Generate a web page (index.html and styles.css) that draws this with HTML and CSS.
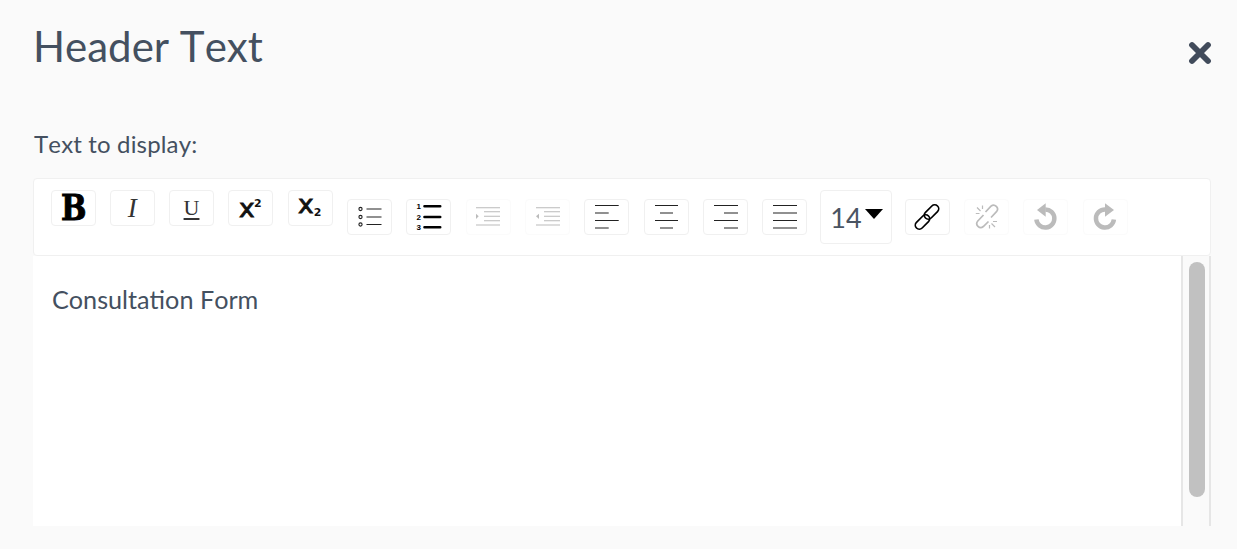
FILE: index.html
```html
<!DOCTYPE html>
<html lang="en">

<head>
    <meta charset="UTF-8">
    <meta name="viewport" content="width=device-width, initial-scale=1.0">
    <title>Header Text</title>
    <link rel="stylesheet" href="styles.css">
</head>

<body>
    <div class="modal">
        <div class="modal-header">
            <h1>Header Text</h1>
            <button class="close" aria-label="Close">
                <svg width="24" height="24" viewBox="0 0 24 24"><path d="M4 4 L20 20 M20 4 L4 20" /></svg>
            </button>
        </div>

        <label class="field-label">Text to display:</label>

        <div class="toolbar">
            <button class="tool bold"><span>B</span></button>
            <button class="tool italic">I</button>
            <button class="tool underline">U</button>
            <button class="tool script"><span class="x up">x</span><span class="num sup">2</span></button>
            <button class="tool script"><span class="x down">x</span><span class="num sub">2</span></button>

            <button class="tool low">
                <svg class="icon thin" viewBox="0 0 45 36">
                    <circle cx="13.5" cy="10" r="1.6" /><circle cx="13.5" cy="18" r="1.6" /><circle cx="13.5" cy="25.5" r="1.6" />
                    <path d="M19.5 10H34.5M19.5 18H34.5M19.5 25.5H34.5" />
                </svg>
            </button>
            <button class="tool low">
                <svg class="icon thick" viewBox="0 0 45 36">
                    <text x="12.7" y="10.2">1</text><text x="12.7" y="20.8">2</text><text x="12.7" y="31">3</text>
                    <path d="M18.5 7.3H34.2M18.5 18H34.2M18.5 28.3H34.2" />
                </svg>
            </button>
            <button class="tool low off">
                <svg class="icon thin" viewBox="0 0 45 36">
                    <path d="M10 8.7H34M18 12.7H34M18 17.3H34M18 21.7H34M10 26H34" />
                    <polygon points="10,14.7 12.7,17.3 10,20" />
                </svg>
            </button>
            <button class="tool low off">
                <svg class="icon thin" viewBox="0 0 45 36">
                    <path d="M11 8.7H35M19 12.7H35M19 17.3H35M19 21.7H35M11 26H35" />
                    <polygon points="14,14.7 11,17.3 14,20" />
                </svg>
            </button>
            <button class="tool low">
                <svg class="icon thin" viewBox="0 0 45 36"><path d="M11 6.5H34.7M11 14H24.7M11 21.5H34.7M11 29H24.7" /></svg>
            </button>
            <button class="tool low">
                <svg class="icon thin" viewBox="0 0 45 36"><path d="M11 6.5H34M16 14H29M11 21.5H34M16 29H29" /></svg>
            </button>
            <button class="tool low">
                <svg class="icon thin" viewBox="0 0 45 36"><path d="M11 6.5H35M21 14H35M11 21.5H35M21 29H35" /></svg>
            </button>
            <button class="tool low">
                <svg class="icon thin" viewBox="0 0 45 36"><path d="M11 6.5H35M11 14H35M11 21.5H35M11 29H35" /></svg>
            </button>

            <button class="font-size">14<span class="caret"></span></button>

            <button class="tool low">
                <svg class="icon chain" viewBox="0 0 45 36">
                    <rect x="9" y="19" width="17" height="8" rx="4" transform="rotate(-45 17.5 23)" />
                    <rect x="18" y="9" width="17" height="8" rx="4" transform="rotate(-45 26.5 13)" />
                </svg>
            </button>
            <button class="tool low off">
                <svg class="icon chain" viewBox="0 0 45 36">
                    <path d="M19.5 16L13.8 22a3.9 3.9 0 0 0 5.5 5.5L24.5 22.5" />
                    <path d="M21.5 13L27 7.2a3.9 3.9 0 0 1 5.5 5.5L27 18.5" />
                    <path class="sparks" d="M13 8.5L16.5 12M11.8 14.5H15.5M18.5 6.5V10M27.5 24.5L31 28M25.5 26V29.5M29 22.5H33" />
                </svg>
            </button>
            <button class="tool low off">
                <svg class="icon arrow" viewBox="0 0 45 36">
                    <path d="M22.3 10.5A9 9 0 1 1 13.4 20.5" />
                    <polygon points="22.7,4.3 22.7,17.7 14,11" />
                </svg>
            </button>
            <button class="tool low off">
                <svg class="icon arrow" viewBox="0 0 45 36">
                    <path d="M22 10.5A9 9 0 1 0 30.9 20.5" />
                    <polygon points="22,4.3 22,17.7 31,11" />
                </svg>
            </button>
        </div>

        <div class="editor">
            <div class="editor-text">Consultation Form</div>
            <div class="scrollbar"><div class="thumb"></div></div>
        </div>
    </div>
</body>

</html>
```

FILE: styles.css
```css
* {
    box-sizing: border-box;
}

html,
body {
    height: 100%;
}

body {
    margin: 0;
    background-color: #fafafa;
    font-family: Lato, 'Open Sans', sans-serif;
    font-kerning: none;
    color: #445060;
    overflow: hidden;
}

.modal {
    padding: 0 26px 0 33px;
}

.modal-header {
    display: flex;
    justify-content: space-between;
    height: 115px;
}

.modal-header h1 {
    margin: 20px 0 0 0;
    font-size: 42px;
    font-weight: 400;
    line-height: 52px;
}

.close {
    width: 24px;
    height: 24px;
    margin: 41px -1px 0 0;
    padding: 0;
    border: none;
    background: none;
}

.close svg {
    display: block;
}

.close path {
    fill: none;
    stroke: #414b5b;
    stroke-width: 5.8;
    stroke-linecap: round;
}

.field-label {
    display: block;
    height: 63px;
    padding: 14px 0 0 1px;
    font-size: 24px;
    line-height: 30px;
    letter-spacing: 0.15px;
}

.toolbar {
    display: flex;
    align-items: flex-start;
    height: 78px;
    padding: 11px 0 0 16.4px;
    background-color: white;
    border: 1px solid #f0f0f0;
    border-radius: 4px;
}

.tool {
    flex: none;
    position: relative;
    width: 45px;
    height: 36px;
    margin-right: 14.33px;
    padding: 0;
    background-color: white;
    border: 1px solid #f0f0f0;
    border-radius: 4px;
    color: #111;
    font-family: 'Liberation Serif', serif;
}

.tool.low {
    margin-top: 9px;
}

.tool.off {
    border-color: #fbfbfb;
}

.bold {
    margin-left: 0.6px;
    margin-right: 13.73px;
    font-family: 'DejaVu Serif', serif;
    font-size: 35px;
    font-weight: 700;
    line-height: 34px;
    color: #000;
}

.bold span {
    display: inline-block;
    transform: scaleX(0.86);
    -webkit-text-stroke: 1px #000;
}

.italic {
    font-size: 27px;
    font-style: italic;
    line-height: 30px;
    color: #333;
}

.underline {
    font-size: 22px;
    line-height: 24px;
    color: #333;
    text-decoration: underline;
    text-underline-offset: 3px;
}

.x {
    position: absolute;
    left: 10px;
    font-family: 'DejaVu Sans', sans-serif;
    font-size: 24px;
    line-height: 24px;
    transform: scaleX(1.1);
    transform-origin: left;
    -webkit-text-stroke: 0.8px #111;
}

.x.up {
    top: 6px;
}

.x.down {
    top: 2px;
    left: 9.7px;
}

.num {
    position: absolute;
    font-family: 'DejaVu Sans', sans-serif;
    font-size: 11px;
    font-weight: 700;
    line-height: 10px;
}

.num.sup {
    top: 8px;
    left: 24.7px;
}

.num.sub {
    top: 17px;
    left: 25px;
}

.icon {
    display: block;
    width: 45px;
    height: 36px;
    margin: -1px;
    overflow: visible;
}

.icon path {
    fill: none;
    stroke: #222;
}

.thin path {
    stroke-width: 1.1;
}

.thin circle {
    fill: none;
    stroke: #222;
    stroke-width: 1.1;
}

.thick path {
    stroke: #000;
    stroke-width: 2.6;
    stroke-linecap: round;
}

.thick text {
    font-family: 'Liberation Sans', sans-serif;
    font-size: 8px;
    font-weight: 700;
    text-anchor: middle;
}

.chain rect {
    fill: none;
    stroke: #000;
    stroke-width: 1.7;
}

.chain path {
    stroke: #000;
    stroke-width: 1.7;
}

.chain .sparks {
    stroke-width: 1.2;
}

.arrow path {
    stroke-width: 4.5;
}

.off .icon path {
    stroke: #bbb;
}

.off .icon polygon {
    fill: #bbb;
    stroke: none;
}

.font-size {
    flex: none;
    display: flex;
    align-items: center;
    width: 72px;
    height: 54px;
    margin: 0 12.27px 0 -1.4px;
    padding: 0 0 0 9px;
    background-color: white;
    border: 1px solid #f0f0f0;
    border-radius: 4px;
    font-family: Lato, sans-serif;
    font-size: 27px;
    color: #4a5462;
}

.caret {
    width: 0;
    height: 0;
    margin: 0 0 7px 3px;
    border-left: 9px solid transparent;
    border-right: 9px solid transparent;
    border-top: 10px solid black;
}

.editor {
    display: flex;
    height: 270px;
    background-color: white;
}

.editor-text {
    flex: 1;
    padding: 26px 0 0 19px;
    font-size: 25.2px;
    line-height: 34px;
}

.scrollbar {
    flex: none;
    width: 30px;
    padding: 6px 4px 0 6px;
    background-color: #fafafa;
    border-left: 2px solid #e6e6e6;
    border-right: 2px solid #e6e6e6;
}

.thumb {
    width: 16px;
    height: 235px;
    background-color: #c1c1c1;
    border-radius: 8px;
}
```
